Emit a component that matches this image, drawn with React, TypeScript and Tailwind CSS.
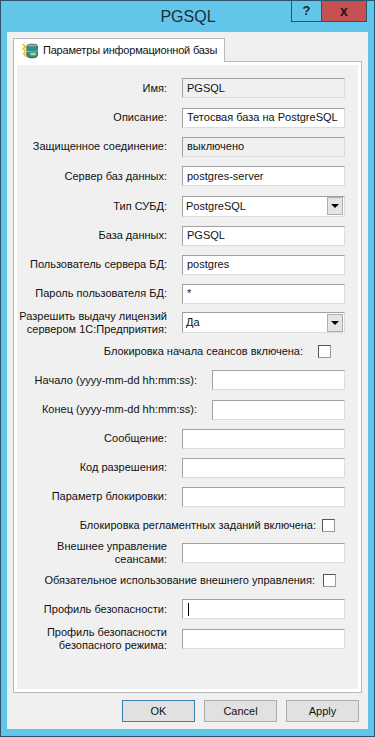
import React from "react";

type Row =
  | { kind: "input"; label: string[]; value?: string; h: string; disabled?: boolean; wide?: boolean; caret?: boolean }
  | { kind: "select"; label: string[]; value: string; h: string }
  | { kind: "check"; label: string; h: string; gap: string; pr: string };

const rows: Row[] = [
  { kind: "input", label: ["Имя:"], value: "PGSQL", h: "h-[30px]", disabled: true },
  { kind: "input", label: ["Описание:"], value: "Тетосвая база на PostgreSQL", h: "h-[29px]" },
  { kind: "input", label: ["Защищенное соединение:"], value: "выключено", h: "h-[29px]", disabled: true },
  { kind: "input", label: ["Сервер баз данных:"], value: "postgres-server", h: "h-[30px]" },
  { kind: "select", label: ["Тип СУБД:"], value: "PostgreSQL", h: "h-[30px]" },
  { kind: "input", label: ["База данных:"], value: "PGSQL", h: "h-[29px]" },
  { kind: "input", label: ["Пользователь сервера БД:"], value: "postgres", h: "h-[29px]" },
  { kind: "input", label: ["Пароль пользователя БД:"], value: "*", h: "h-[29px]" },
  { kind: "select", label: ["Разрешить выдачу лицензий", "сервером 1С:Предприятия:"], value: "Да", h: "h-[29px]" },
  { kind: "check", label: "Блокировка начала сеансов включена:", h: "h-[28px]", gap: "gap-[15px]", pr: "pr-[27px]" },
  { kind: "input", label: ["Начало (yyyy-mm-dd hh:mm:ss):"], h: "h-[30px]", wide: true },
  { kind: "input", label: ["Конец (yyyy-mm-dd hh:mm:ss):"], h: "h-[29px]", wide: true },
  { kind: "input", label: ["Сообщение:"], h: "h-[29px]" },
  { kind: "input", label: ["Код разрешения:"], h: "h-[29px]" },
  { kind: "input", label: ["Параметр блокировки:"], h: "h-[29px]" },
  { kind: "check", label: "Блокировка регламентных заданий включена:", h: "h-[29px]", gap: "gap-[6px]", pr: "pr-[23px]" },
  { kind: "input", label: ["Внешнее управление", "сеансами:"], h: "h-[26px]" },
  { kind: "check", label: "Обязательное использование внешнего управления:", h: "h-[28px]", gap: "gap-[8px]", pr: "pr-[22px]" },
  { kind: "input", label: ["Профиль безопасности:"], h: "h-[30px]", caret: true },
  { kind: "input", label: ["Профиль безопасности", "безопасного режима:"], h: "h-[30px]" },
];

function Label({ lines, wide }: { lines: string[]; wide?: boolean }) {
  return (
    <div className={`${wide ? "w-[180px]" : "w-[150px]"} shrink-0 text-right leading-[13px] whitespace-nowrap`}>
      {lines.map((l) => (
        <div key={l}>{l}</div>
      ))}
    </div>
  );
}

function TabIcon() {
  return (
    <svg width="18" height="18" viewBox="0 0 17 17" className="shrink-0">
      <ellipse cx="10.5" cy="4" rx="5" ry="2" fill="#9aaeb2" stroke="#4c5b5f" strokeWidth="0.8" />
      <path d="M5.5 4v9c0 1.1 2.2 2 5 2s5-.9 5-2V4" fill="#2f8f8a" stroke="#3d4f52" strokeWidth="0.8" />
      <path d="M5.5 7.5c0 1.1 2.2 2 5 2s5-.9 5-2" fill="none" stroke="#7fd3c8" strokeWidth="0.8" />
      <path d="M1.5 2l3 2.5-2.5 2 3 2.5-2.5 2 3 3" fill="none" stroke="#e2c82c" strokeWidth="1.6" />
      <path d="M9 10.5h5v2H9z" fill="#b9e07a" />
    </svg>
  );
}

export default function App() {
  return (
    <div className="w-[375px] h-[737px] bg-[#61c6e9] border border-[#2f5467] flex flex-col font-['Liberation_Sans',Arial,sans-serif] text-[11px] text-[#111]">
      {/* title bar */}
      <div className="relative h-[31px] flex items-center justify-center">
        <span className="text-[16px] text-[#1f2d36] pl-[1px]">PGSQL</span>
        <div className="absolute top-[-1px] right-[7px] flex">
          <div className="w-[31px] h-[22px] border border-[#2d5569] bg-[#61c6e9] flex items-center justify-center font-bold text-[13px] text-[#1b2a33]">
            ?
          </div>
          <div className="w-[45px] h-[22px] border border-l-0 border-[#2d5569] bg-[#c75050] flex items-center justify-center font-bold text-[14px] text-[#1a1a1a]">
            x
          </div>
        </div>
      </div>

      {/* client area */}
      <div className="mx-[6px] h-[697px] bg-[#f0f0f0] flex flex-col">
        <div className="pl-[6px] pt-[6px]">
          <div className="relative z-10 -mb-px w-[212px] h-[24px] bg-white border border-b-0 border-[#b9b9b9] flex items-center gap-[4px] pl-[7px] whitespace-nowrap">
            <TabIcon />
            <span className="tracking-[-0.2px]">Параметры информационной базы</span>
          </div>
        </div>
        <div className="mx-[6px] h-[632px] border border-[#b9b9b9] bg-white p-[3px] flex">
          <div className="flex-1 bg-[#f0f0f0] pt-[8px]">
            {rows.map((r, i) => {
              if (r.kind === "check") {
                return (
                  <div key={i} className={`${r.h} ${r.gap} ${r.pr} flex items-center justify-end whitespace-nowrap`}>
                    <span>{r.label}</span>
                    <div className="w-[13px] h-[13px] bg-white border border-[#555] border-b-[#9a9a9a] border-r-[#9a9a9a]" />
                  </div>
                );
              }
              if (r.kind === "select") {
                return (
                  <div key={i} className={`${r.h} flex items-center gap-[15px]`}>
                    <Label lines={r.label} />
                    <div className="w-[163px] h-[21px] bg-white border border-[#a0a0a0] border-r-[#dcdcdc] border-b-[#dcdcdc] flex items-center">
                      <span className="flex-1 pl-[3px]">{r.value}</span>
                      <div className="w-[16px] h-[18px] mr-px bg-[#e4e4e4] border border-[#adadad] flex items-center justify-center">
                        <div className="w-0 h-0 border-l-[4px] border-r-[4px] border-t-[4px] border-l-transparent border-r-transparent border-t-black" />
                      </div>
                    </div>
                  </div>
                );
              }
              return (
                <div key={i} className={`${r.h} flex items-center gap-[15px]`}>
                  <Label lines={r.label} wide={r.wide} />
                  <div
                    className={`${r.wide ? "w-[133px]" : "w-[163px]"} h-[20px] ${
                      r.disabled ? "bg-[#f0f0f0]" : "bg-white"
                    } border border-[#a0a0a0] border-r-[#dcdcdc] border-b-[#dcdcdc] flex items-center pl-[4px] whitespace-nowrap`}
                  >
                    {r.caret ? <div className="w-px h-[13px] bg-black ml-[1px]" /> : <span>{r.value}</span>}
                  </div>
                </div>
              );
            })}
          </div>
        </div>
        <div className="mt-[7px] flex justify-end gap-[9px] pr-[9px]">
          <button className="w-[73px] h-[22px] bg-[#e1e1e1] border border-[#3c7fb1]">OK</button>
          <button className="w-[73px] h-[22px] bg-[#e1e1e1] border border-[#adadad]">Cancel</button>
          <button className="w-[73px] h-[22px] bg-[#e1e1e1] border border-[#adadad]">Apply</button>
        </div>
      </div>
    </div>
  );
}
